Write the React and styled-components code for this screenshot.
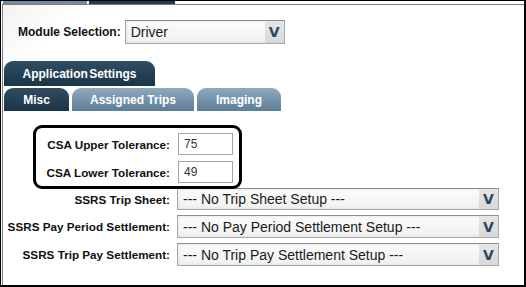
import React from "react";
import styled, { createGlobalStyle } from "styled-components";

const Global = createGlobalStyle`
  html, body { margin: 0; padding: 0; background: #fff; }
  body { font-family: "Liberation Sans", Arial, sans-serif; }
`;

const Frame = styled.div`
  width: 526px;
  height: 287px;
  box-sizing: border-box;
  border-style: solid;
  border-color: #000;
  border-width: 1px 2px 2px 1px;
  background: #fff;
  display: flex;
  flex-direction: column;
  overflow: hidden;
`;

const TopStrip = styled.div`
  height: 3px;
  display: flex;
  gap: 2px;
  padding-left: 2px;
`;

const StripPiece = styled.div`
  width: ${(p) => p.$w}px;
  height: 3px;
  background: ${(p) => (p.$dark ? "#1f3a4e" : "#6f8ca4")};
`;

const Panel = styled.div`
  flex: 1;
  margin-left: 1px;
  border-top: 1px solid #7d7d7d;
  border-left: 1px solid #7d7d7d;
  background: linear-gradient(135deg, #f2f2f2 0px, #ffffff 60px);
  display: flex;
  flex-direction: column;
`;

const ModuleRow = styled.div`
  display: flex;
  align-items: center;
  gap: 4px;
  margin: 15px 0 0 15px;
  height: 24px;
`;

const Label = styled.span`
  font-family: "Liberation Sans", Arial, sans-serif;
  font-weight: bold;
  font-size: 12px;
  color: #111;
  white-space: nowrap;
`;

const Select = styled.div`
  box-sizing: border-box;
  width: ${(p) => p.$w}px;
  height: ${(p) => p.$h}px;
  border: 1px solid #a8a8a8;
  border-top-color: #8c8c8c;
  background: linear-gradient(#fbfbfb, #f1f1f1);
  box-shadow: inset 0 0 3px rgba(0, 0, 0, 0.12);
  display: flex;
  align-items: center;
`;

const SelectText = styled.span`
  flex: 1;
  padding-left: 5px;
  font-family: "Liberation Sans", Arial, sans-serif;
  font-size: 14px;
  color: #1a1a1a;
  white-space: nowrap;
  overflow: hidden;
`;

const Arrow = styled.span`
  width: 19px;
  align-self: stretch;
  background: linear-gradient(#e6e6e6, #d8d8d8);
  display: flex;
  align-items: center;
  justify-content: center;
  font-family: "DejaVu Sans", "Liberation Sans", sans-serif;
  font-weight: bold;
  font-size: 14px;
  color: #2b475c;
  transform-origin: center;
`;

const TabRow = styled.div`
  display: flex;
  gap: 3px;
  margin-left: 1px;
  margin-top: ${(p) => p.$mt}px;
  height: ${(p) => p.$h}px;
`;

const Tab = styled.div`
  box-sizing: border-box;
  width: ${(p) => p.$w}px;
  border-radius: 9px 9px 0 0;
  background: ${(p) =>
    p.$active
      ? "linear-gradient(#2f4d64, #1b3447)"
      : "linear-gradient(#8eaac0, #5d7d96)"};
  display: flex;
  align-items: center;
  justify-content: center;
  font-family: "Liberation Sans", Arial, sans-serif;
  font-weight: bold;
  font-size: 12px;
  color: #fff;
  word-spacing: ${(p) => (p.$tight ? "-2px" : "0")};
  padding-top: 1px;
`;

const Form = styled.div`
  position: relative;
  margin: 22px 0 0 3px;
  display: grid;
  grid-template-columns: 164px auto;
  column-gap: 7px;
  row-gap: 5px;
  align-items: center;
  justify-content: start;
`;

const FieldLabel = styled(Label)`
  text-align: right;
  font-size: 11.7px;
`;

const Input = styled.div`
  box-sizing: border-box;
  width: 55px;
  height: 22px;
  margin-left: 1px;
  border: 1px solid #a4a4a4;
  background: #fff;
  display: flex;
  align-items: center;
  padding-left: 5px;
  font-family: "Liberation Sans", Arial, sans-serif;
  font-size: 12px;
  color: #333;
  margin-bottom: ${(p) => (p.$first ? 1 : 0)}px;
`;

const Callout = styled.div`
  position: absolute;
  left: 27px;
  top: -8px;
  width: 209px;
  height: 64px;
  box-sizing: border-box;
  border: 3px solid #000;
  border-radius: 9px;
  pointer-events: none;
`;

const selects = [
  ["SSRS Trip Sheet:", "--- No Trip Sheet Setup ---", 22],
  ["SSRS Pay Period Settlement:", "--- No Pay Period Settlement Setup ---", 23],
  ["SSRS Trip Pay Settlement:", "--- No Trip Pay Settlement Setup ---", 23],
];

export default function App() {
  return (
    <>
      <Global />
      <Frame>
        <TopStrip>
          <StripPiece $w={84} />
          <StripPiece $w={86} $dark />
        </TopStrip>
        <Panel>
          <ModuleRow>
            <Label>Module Selection:</Label>
            <Select $w={160} $h={24}>
              <SelectText>Driver</SelectText>
              <Arrow>V</Arrow>
            </Select>
          </ModuleRow>
          <TabRow $mt={17} $h={25}>
            <Tab $w={151} $active $tight>
              Application Settings
            </Tab>
          </TabRow>
          <TabRow $mt={2} $h={23}>
            <Tab $w={65} $active>
              Misc
            </Tab>
            <Tab $w={122}>Assigned Trips</Tab>
            <Tab $w={84}>Imaging</Tab>
          </TabRow>
          <Form>
            <FieldLabel>CSA Upper Tolerance:</FieldLabel>
            <Input $first>75</Input>
            <FieldLabel>CSA Lower Tolerance:</FieldLabel>
            <Input>49</Input>
            {selects.map(([label, text, h]) => (
              <React.Fragment key={label}>
                <FieldLabel>{label}</FieldLabel>
                <Select $w={322} $h={h}>
                  <SelectText>{text}</SelectText>
                  <Arrow>V</Arrow>
                </Select>
              </React.Fragment>
            ))}
            <Callout />
          </Form>
        </Panel>
      </Frame>
    </>
  );
}
